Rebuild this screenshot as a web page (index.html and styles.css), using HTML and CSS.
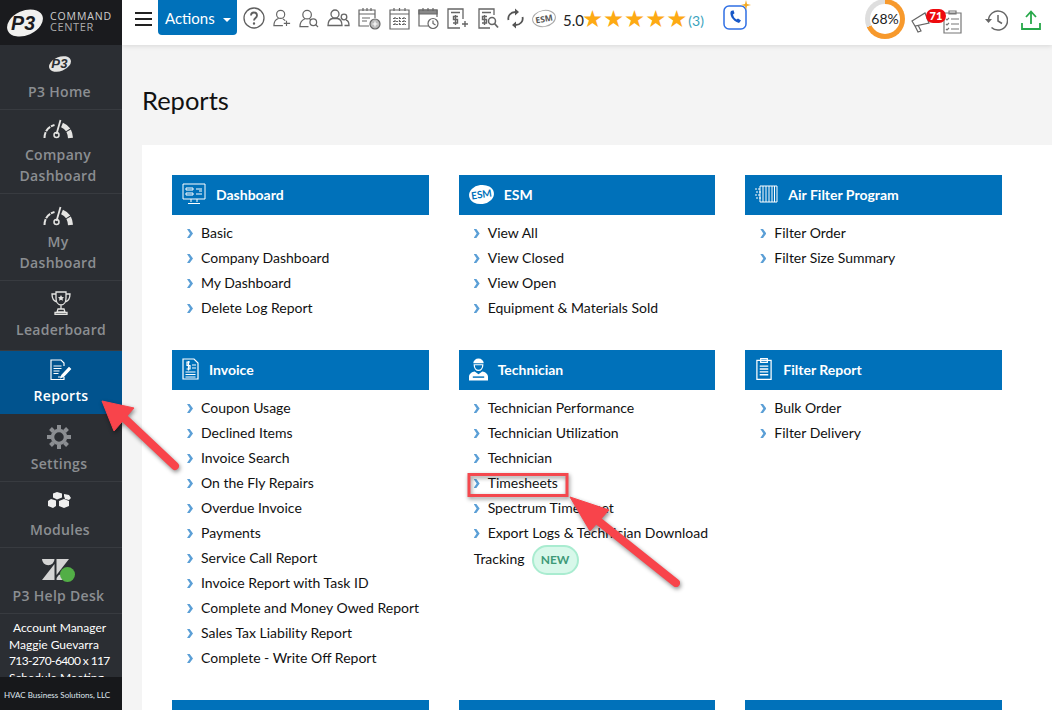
FILE: index.html
```html
<!DOCTYPE html>
<html lang="en">
  <head>
    <meta charset="UTF-8" />
    <meta name="viewport" content="width=device-width, initial-scale=1.0" />
    <title>Reports</title>
    <link rel="stylesheet" href="styles.css">
  </head>
  <body>
    <aside class="sidebar">
      <div class="brand">
        <svg class="brand-logo" width="36" height="36" viewBox="0 0 44 44">
          <ellipse cx="22" cy="22" rx="23" ry="15" fill="#f1f1ef" transform="rotate(-24 22 22)"/>
          <text x="5" y="31" class="logo-text">P3</text>
        </svg>
        <div class="brand-name">COMMAND<br><span>CENTER</span></div>
      </div>

      <a class="nav-item nav-home">
        <svg width="24" height="20" viewBox="0 0 44 36">
          <ellipse cx="22" cy="18" rx="21" ry="13" fill="#e4e4e2" transform="rotate(-22 22 18)"/>
          <text x="6" y="26" class="logo-text logo-dark">P3</text>
        </svg>
        <span>P3 Home</span>
      </a>
      <a class="nav-item nav-company">
        <svg width="30" height="20" viewBox="0 0 30 20" fill="none" stroke="#e4e4e2">
          <path d="M1.500 19c0-6 3-11 10-13" stroke-width="2" stroke-dasharray="6 1"/>
          <path d="M19 6c5 2 8 6 8.500 13" stroke-width="5" stroke-dasharray="8 1"/>
          <path d="M17.500 1l-4 14" stroke-width="1.800"/>
          <circle cx="13.500" cy="16" r="2.500" stroke-width="1.500"/>
        </svg>
        <span>Company<br>Dashboard</span>
      </a>
      <a class="nav-item nav-my">
        <svg width="30" height="20" viewBox="0 0 30 20" fill="none" stroke="#e4e4e2">
          <path d="M1.500 19c0-6 3-11 10-13" stroke-width="2" stroke-dasharray="6 1"/>
          <path d="M19 6c5 2 8 6 8.500 13" stroke-width="5" stroke-dasharray="8 1"/>
          <path d="M17.500 1l-4 14" stroke-width="1.800"/>
          <circle cx="13.500" cy="16" r="2.500" stroke-width="1.500"/>
        </svg>
        <span>My<br>Dashboard</span>
      </a>
      <a class="nav-item nav-leader">
        <svg width="20" height="24" viewBox="0 0 20 24" fill="none" stroke="#e4e4e2" stroke-width="1.300">
          <path d="M5 1h10v6c0 4-2 7-5 7s-5-3-5-7zM5 3H1c0 4 1 7 5 8M15 3h4c0 4-1 7-5 8M10 14v4M7 18h6l1 3H6zM4 21.500h12v2H4z"/>
          <path d="M10 4l1 2 2 .2-1.500 1.500.5 2-2-1-2 1 .5-2L7 6.200 9 6z" fill="#e4e4e2" stroke="none"/>
        </svg>
        <span>Leaderboard</span>
      </a>
      <a class="nav-item nav-reports">
        <svg width="22" height="22" viewBox="0 0 22 22" fill="none" stroke="#fff" stroke-width="1.200">
          <path d="M14 18v2.500H1V1h10l3 3v3"/>
          <path d="M3.500 7h8M3.500 9.500h8M3.500 12h6M3.500 14.500h5M8 18h3"/>
          <path d="M12 16l-1 2.500 2.500-1L20.500 10l-1.500-1.500z" fill="#fff"/>
        </svg>
        <span>Reports</span>
      </a>
      <a class="nav-item nav-settings">
        <svg width="24" height="24" viewBox="0 0 24 24" fill="none" stroke="#8b8e92">
          <circle cx="12" cy="12" r="6.500" stroke-width="3.500"/>
          <path d="M12 0v4M12 20v4M0 12h4M20 12h4M3.500 3.500l3 3M17.500 17.500l3 3M3.500 20.500l3-3M17.500 6.500l3-3" stroke-width="4"/>
        </svg>
        <span>Settings</span>
      </a>
      <a class="nav-item nav-modules">
        <svg width="24" height="19" viewBox="0 0 24 19" fill="#efefef">
          <path d="M9 0l5 1.500v4L9 7.500 5 5.500v-4zM3 7l5 1.500V14l-3 2-5-2V9zM11 9l5-2 5 2v5l-5 2-5-2zM16 2l5 1 2 3-2 2-4-1-1-3z"/>
        </svg>
        <span>Modules</span>
      </a>
      <a class="nav-item nav-help">
        <span class="help-icon">
          <svg width="27" height="21" viewBox="0 0 27 21" fill="#d4d4d4">
            <path d="M12.500 5v16H0zM0 0a6.250 6.250 0 0 0 12.500 0zM14.500 0H27L14.500 16zM14.500 21a6.250 6.250 0 0 1 12.500 0z"/>
          </svg>
          <i class="help-dot"></i>
        </span>
        <span>P3 Help Desk</span>
      </a>
      <div class="account">
        <p class="account-title">Account Manager</p>
        <p>Maggie Guevarra</p>
        <p class="account-phone">713-270-6400 x 117</p>
        <p>Schedule Meeting</p>
      </div>
      <div class="sidebar-foot">HVAC Business Solutions, LLC</div>
    </aside>

    <div class="main">
      <header class="topbar">
        <button class="burger"><i></i><i></i><i></i></button>
        <button class="actions">Actions <b></b></button>

        <div class="tools">
          <svg width="22" height="22" viewBox="0 0 22 22" fill="none" stroke="#5f5f5f" stroke-width="1.300">
            <circle cx="11" cy="11" r="10"/>
            <path d="M8 8.500c0-4 6-4 6 0 0 2.500-3 2.500-3 5" stroke-width="1.800"/>
            <circle cx="11" cy="16.500" r=".6" stroke-width="1.200"/>
          </svg>
          <svg width="18" height="18" viewBox="0 0 20 20" fill="none" stroke="#666" stroke-width="1.300">
            <path d="M4 6a4.500 4.500 0 1 1 9 0c0 2.500-2 4.500-4.500 4.500S4 8.500 4 6zM11 18.500H1c0-4 2-7 5-8M11 11c1 .5 2 1 2.500 2M15 13v6M12 16h7"/>
          </svg>
          <svg width="20" height="19" viewBox="0 0 21 20" fill="none" stroke="#666" stroke-width="1.300">
            <path d="M4 6a4.500 4.500 0 1 1 9 0c0 2.500-2 4.500-4.500 4.500S4 8.500 4 6zM10 18.500H1c0-4 2-7 5-8M11 10.500l1.500.8"/>
            <circle cx="15" cy="14" r="3.500"/>
            <path d="M17.500 16.500l2.500 2.500"/>
          </svg>
          <svg width="23" height="18" viewBox="0 0 23 18" fill="none" stroke="#666" stroke-width="1.300">
            <path d="M4 5a4 4 0 1 1 8 0 4 4 0 0 1-8 0zM1 16.500c0-4 2-6.500 4.500-7h5c2.500.5 4.500 3 4.500 7z"/>
            <circle cx="17" cy="8" r="2.800"/>
            <path d="M17.500 16.500H22c0-3-1-5-3-5.500"/>
          </svg>
          <svg width="23" height="23" viewBox="0 0 23 23" fill="none" stroke="#666" stroke-width="1.200">
            <path d="M11 19H1V3h16v8M1 7h16M5 1v3M9 1v3M13 1v3M4 11h8M4 14h5"/>
            <circle cx="17" cy="17" r="5" fill="#bbb"/>
            <path d="M17 14.500v5M14.500 17h5" stroke="#fff"/>
          </svg>
          <svg width="21" height="23" viewBox="0 0 21 23" fill="none" stroke="#666" stroke-width="1.200">
            <path d="M1 3h19v19H1zM1 7h19M5 1v3M10.500 1v3M16 1v3"/>
            <path d="M6 10v9M10.500 10v9M15 10v9M4 11.500h13M4 14.500h13M4 17.500h13" stroke-dasharray="2 1"/>
          </svg>
          <svg width="21" height="23" viewBox="0 0 21 23" fill="none" stroke="#666" stroke-width="1.200">
            <path d="M10 19H1V3h18v7"/>
            <path d="M1 3h18v4H1z" fill="#888"/>
            <path d="M5 1v3M10 1v3M15 1v3"/>
            <circle cx="15" cy="16.500" r="5"/>
            <path d="M15 13.500v3l2.500 1.500"/>
          </svg>
          <svg width="21" height="21" viewBox="0 0 21 21" fill="none" stroke="#666" stroke-width="1.300">
            <path d="M13 20H1V1h15v10M4 4.500h9"/>
            <path d="M11 8.500H6.500v3h4v3.500H6M8.500 7v10M15 16h6M18 13v6" stroke-width="1.400"/>
          </svg>
          <svg class="tool-q" width="21" height="21" viewBox="0 0 21 21" fill="none" stroke="#666" stroke-width="1.300">
            <path d="M12 20H1V1h15v6M4 4.500h9"/>
            <path d="M9 8.500H4.500v3h4V15H4M6.500 7v10" stroke-width="1.400"/>
            <circle cx="14" cy="13" r="3.500" stroke-width="1.500"/>
            <path d="M16.500 15.500L20 19.500" stroke-width="1.800"/>
          </svg>
          <svg width="17" height="21" viewBox="0 0 17 21" fill="none" stroke="#555" stroke-width="1.800">
            <path d="M1.500 12c-1-4 2-8 7-8M15.500 9c1 4-2 8-7 8"/>
            <path d="M8 .5l4 3.500-4 3.500zM9 20.500L5 17l4-3.500z" fill="#555" stroke="none"/>
          </svg>
          <span class="esm-badge">ESM</span>
        </div>

        <div class="rating">
          <span class="score">5.0</span>
          <span class="stars">★★★★★</span>
          <span class="count">(3)</span>
        </div>

        <svg class="phone" width="28" height="31" viewBox="0 0 28 31" fill="none">
          <rect x="1" y="6" width="22" height="23" rx="5" stroke="#2f6fe4" stroke-width="1.500"/>
          <path d="M8 11c-2 3 1 10 8 12l2-2.500-3-2-1.500 1c-2-1-3-3-3.500-5l1.500-1.200-1-3z" fill="#1758c8"/>
          <path d="M23 0l1 4 4 1-4 1-1 4-1-4-4-1 4-1z" fill="#f4a91f"/>
        </svg>

        <div class="topbar-right">
          <div class="ring"><span>68%</span></div>
          <div class="notices">
            <svg width="20" height="22" viewBox="0 0 20 22" fill="none" stroke="#666" stroke-width="1.200">
              <path d="M1 10l13-8 4 10-14 3zM4 15l3 6 3-1-3-6M15 5l3-1"/>
            </svg>
            <span class="badge">71</span>
            <svg class="notice-clip" width="19" height="25" viewBox="0 0 19 25" fill="none" stroke="#777" stroke-width="1.200">
              <path d="M1 4h17v20H1zM6 4V2h7v3H6z"/>
              <path d="M3 10l1 1 2-2M8 10h8M3 15l1 1 2-2M8 15h8M3 20l1 1 2-2M8 20h8"/>
            </svg>
          </div>
          <svg class="history" width="23" height="21" viewBox="0 0 23 21" fill="none" stroke="#666" stroke-width="1.500">
            <path d="M3.500 10.500a9.500 9.500 0 1 1 3 7"/>
            <path d="M13 5v6l4 2.500"/>
            <path d="M0 9h7l-3.500 4z" fill="#666" stroke="none"/>
          </svg>
          <svg class="upload" width="20" height="20" viewBox="0 0 20 20" fill="none" stroke="#27a84a" stroke-width="1.800">
            <path d="M1 13v6h18v-6M10 14V2M5 7l5-5.500L15 7"/>
          </svg>
        </div>
      </header>

      <h1 class="page-title">Reports</h1>

      <section class="panel">
        <div class="report-grid">
          <div class="report-group">
            <h2 class="group-head">
              <svg width="24" height="22" viewBox="0 0 24 22" fill="none" stroke="#fff">
                <path d="M1 1h22v15H1zM9 16v3M15 16v3M6 20.500h12"/>
                <path d="M4 5h7v2H4zM4 10h7v2H4zM14 6h6M14 11h6M17 8h3"/>
              </svg>
              Dashboard
            </h2>
            <ul class="report-list">
              <li><a>Basic</a></li>
              <li><a>Company Dashboard</a></li>
              <li><a>My Dashboard</a></li>
              <li><a>Delete Log Report</a></li>
            </ul>
          </div>
          <div class="report-group">
            <h2 class="group-head">
              <span class="esm-head">ESM</span>
              ESM
            </h2>
            <ul class="report-list">
              <li><a>View All</a></li>
              <li><a>View Closed</a></li>
              <li><a>View Open</a></li>
              <li><a>Equipment &amp; Materials Sold</a></li>
            </ul>
          </div>
          <div class="report-group">
            <h2 class="group-head">
              <svg width="23" height="18" viewBox="0 0 23 18" fill="none" stroke="#fff">
                <path d="M5 1h17v16H5zM8 1v16M11 1v16M14 1v16M17 1v16M19.500 1v16"/>
                <path d="M0 4h6M1 7h6M0 10h6M1 13h6" stroke-dasharray="2 1"/>
              </svg>
              Air Filter Program
            </h2>
            <ul class="report-list">
              <li><a>Filter Order</a></li>
              <li><a>Filter Size Summary</a></li>
            </ul>
          </div>

          <div class="report-group">
            <h2 class="group-head">
              <svg width="17" height="22" viewBox="0 0 17 22" fill="none" stroke="#fff" stroke-width="1.200">
                <path d="M1 1h11l4 4v16H1z"/>
                <path d="M8 4H5v3.500h3V11H4.500M6.500 3v9.500M10 7h4M10 10h4M3.500 14h10M3.500 16.500h10M3.500 19h10"/>
              </svg>
              Invoice
            </h2>
            <ul class="report-list">
              <li><a>Coupon Usage</a></li>
              <li><a>Declined Items</a></li>
              <li><a>Invoice Search</a></li>
              <li><a>On the Fly Repairs</a></li>
              <li><a>Overdue Invoice</a></li>
              <li><a>Payments</a></li>
              <li><a>Service Call Report</a></li>
              <li><a>Invoice Report with Task ID</a></li>
              <li><a>Complete and Money Owed Report</a></li>
              <li><a>Sales Tax Liability Report</a></li>
              <li><a>Complete - Write Off Report</a></li>
            </ul>
          </div>
          <div class="report-group">
            <h2 class="group-head">
              <svg width="19" height="23" viewBox="0 0 20 23" fill="#fff">
                <path d="M4.500 5a5.500 5 0 0 1 11 0z"/>
                <path d="M5.500 6.500h9c0 3.500-2 6-4.500 6s-4.500-2.500-4.500-6z" fill="none" stroke="#fff" stroke-width="1.300"/>
                <path d="M0 23v-4c0-3 3-5 6-5.500l4 3 4-3c3 .5 6 2.500 6 5.500v4z"/>
                <path d="M4 19.500h12" stroke="#0071ba" stroke-width="1.500"/>
              </svg>
              Technician
            </h2>
            <ul class="report-list">
              <li><a>Technician Performance</a></li>
              <li><a>Technician Utilization</a></li>
              <li><a>Technician</a></li>
              <li><a>Timesheets</a></li>
              <li><a>Spectrum Timesheet</a></li>
              <li><a>Export Logs &amp; Technician Download Tracking</a><span class="new-tag">NEW</span></li>
            </ul>
          </div>
          <div class="report-group">
            <h2 class="group-head">
              <svg width="18" height="24" viewBox="0 0 19 24" fill="none" stroke="#fff" stroke-width="1.300">
                <path d="M2 3h15v20H2zM6 4V1h7v4H6z"/>
                <path d="M5 9h9M5 12h9M5 15h9M5 18h9" stroke-width="1.500"/>
              </svg>
              Filter Report
            </h2>
            <ul class="report-list">
              <li><a>Bulk Order</a></li>
              <li><a>Filter Delivery</a></li>
            </ul>
          </div>

          <div class="report-group"><div class="group-head"></div></div>
          <div class="report-group"><div class="group-head"></div></div>
          <div class="report-group"><div class="group-head"></div></div>
        </div>
      </section>
    </div>

    <!-- callouts pasted over the screenshot -->
    <svg class="callouts" width="1052" height="710" viewBox="0 0 1052 710" fill="none">
      <rect x="469" y="474.500" width="98" height="21" stroke="#f4484e" stroke-width="3"/>
      <path d="M175 466L122 416" stroke="#f8444b" stroke-width="8" stroke-linecap="round"/>
      <path d="M102 401L134 408 114 431z" fill="#f8444b" stroke="#f8444b" stroke-linejoin="round"/>
      <path d="M676 583L592 516" stroke="#f8444b" stroke-width="8" stroke-linecap="round"/>
      <path d="M570 497L609 510 590 531z" fill="#f8444b" stroke="#f8444b" stroke-linejoin="round"/>
    </svg>
  </body>
</html>
```

FILE: styles.css
```css
* {
  box-sizing: border-box;
}

html,
body {
  height: 710px;
  margin: 0;
  overflow: hidden;
}

body {
  display: flex;
  position: relative;
  background-color: #f4f4f4;
  font-family: Lato, sans-serif;
  color: #111;
}

/* Sidebar */
.sidebar {
  width: 122px;
  height: 710px;
  flex-shrink: 0;
  display: flex;
  flex-direction: column;
  position: relative;
  background-color: #2b2e33;
  overflow: hidden;
}

.brand {
  height: 45px;
  flex-shrink: 0;
  display: flex;
  align-items: center;
  gap: 7px;
  padding-left: 7px;
  background-color: #1a1b1e;
}

.brand-name {
  margin-top: -2px;
  font-family: "Open Sans", sans-serif;
  font-size: 10.500px;
  line-height: 12px;
  letter-spacing: .9px;
  color: #cfcfcf;
}

.brand-name span {
  display: block;
  margin-top: -1px;
  color: #aaa;
  font-size: 11px;
  letter-spacing: .6px;
}

.brand-name br {
  display: none;
}

.logo-text {
  font-family: "Liberation Sans", sans-serif;
  font-size: 24px;
  font-weight: 700;
  font-style: italic;
  fill: #1a1b1e;
}

.logo-dark {
  fill: #2b2e33;
}

.nav-item {
  display: flex;
  flex-direction: column;
  align-items: center;
  flex-shrink: 0;
  border-bottom: 1px solid #383b40;
  font-family: "Open Sans", sans-serif;
  font-size: 14px;
  font-weight: 600;
  line-height: 21px;
  letter-spacing: .3px;
  text-align: center;
  color: #8b8e92;
}

.nav-home {
  height: 65px;
  padding-top: 9px;
  padding-right: 3px;
  gap: 7px;
}

.nav-company {
  height: 84px;
  padding-top: 9px;
  padding-right: 6px;
  gap: 5px;
}

.nav-my {
  height: 87px;
  padding-top: 12px;
  padding-right: 6px;
  gap: 5px;
}

.nav-leader {
  height: 70px;
  padding-top: 10px;
  gap: 4px;
}

.nav-reports {
  height: 63px;
  padding-top: 8px;
  gap: 4px;
  border-bottom: 0;
  background-color: #01538e;
  color: #fff;
}

.nav-settings {
  height: 68px;
  padding-top: 11px;
  gap: 4px;
  padding-right: 4px;
}

.nav-modules {
  height: 66px;
  padding-top: 10px;
  padding-right: 2px;
  gap: 8px;
}

.nav-help {
  height: 66px;
  padding-top: 9px;
  padding-right: 5px;
  gap: 4px;
}

.help-icon {
  display: block;
  position: relative;
  height: 24px;
  line-height: 0;
}

.help-icon svg {
  margin-top: 2px;
  margin-right: 6px;
}

.help-dot {
  position: absolute;
  right: 0;
  bottom: -1px;
  width: 15px;
  height: 15px;
  border-radius: 50%;
  background-color: #52ae46;
}

.account {
  padding: 6px 0 0 9px;
  height: 63px;
  flex-shrink: 0;
  overflow: hidden;
  font-size: 12px;
  line-height: 16.500px;
  white-space: nowrap;
  color: #fff;
}

.account p {
  margin: 0;
}

.account-title {
  padding-left: 4px;
}

.account-phone {
  letter-spacing: -.6px;
}

.sidebar-foot {
  height: 33px;
  flex-shrink: 0;
  padding: 12px 0 0 4px;
  background-color: #17181b;
  font-size: 8px;
  line-height: 12px;
  white-space: nowrap;
  color: #dfe6ee;
}

/* Top bar */
.main {
  flex: 1;
  min-width: 0;
}

.topbar {
  height: 45px;
  display: flex;
  align-items: flex-start;
  padding-left: 13px;
  background-color: #fff;
  box-shadow: 0 1px 5px rgba(0, 0, 0, .12);
}

.burger {
  width: 17px;
  height: 14px;
  margin-top: 12px;
  padding: 0;
  border: 0;
  background: none;
  display: flex;
  flex-direction: column;
  justify-content: space-between;
}

.burger i {
  display: block;
  height: 2px;
  background-color: #222;
}

.actions {
  width: 79px;
  height: 35px;
  margin-left: 6px;
  padding: 0 0 0 7px;
  border: 0;
  border-radius: 0 0 4px 4px;
  text-align: left;
  font-family: Lato, sans-serif;
  font-size: 15px;
  color: #fff;
  background-color: #0071ba;
}

.actions b {
  display: inline-block;
  margin-left: 4px;
  border-top: 4px solid #fff;
  border-left: 4px solid transparent;
  border-right: 4px solid transparent;
  vertical-align: middle;
}

.tools {
  display: flex;
  align-items: center;
  gap: 8px;
  height: 36px;
  margin-left: 6px;
}

.tool-q {
  margin-left: 2px;
}

.esm-badge {
  width: 24px;
  height: 17px;
  border: 1px solid #aaa;
  border-radius: 50%;
  transform: rotate(-10deg);
  font-family: "Open Sans", sans-serif;
  font-size: 8.500px;
  font-weight: 700;
  line-height: 15px;
  text-align: center;
  color: #555;
}

.rating {
  display: flex;
  align-items: center;
  height: 40px;
  margin-left: 7px;
}

.score {
  margin-right: -2px;
  font-size: 15px;
  color: #222;
}

.stars {
  font-family: "DejaVu Sans", sans-serif;
  font-size: 23.500px;
  line-height: 1;
  color: #fdaa13;
}

.count {
  margin-left: 1px;
  font-size: 14px;
  color: #3aa3bd;
}

.phone {
  margin-left: 19px;
  flex-shrink: 0;
}

.topbar-right {
  display: flex;
  align-items: flex-start;
  margin-left: auto;
  padding-right: 11px;
}

.ring {
  width: 40px;
  height: 40px;
  margin-top: -1px;
  border-radius: 50%;
  background: conic-gradient(#f7992c 0 68%, #dedede 68% 100%);
  display: flex;
  align-items: center;
  justify-content: center;
}

.ring span {
  width: 30px;
  height: 30px;
  border-radius: 50%;
  background-color: #fff;
  font-size: 14px;
  line-height: 30px;
  text-align: center;
  color: #222;
}

.notices {
  display: flex;
  position: relative;
  align-items: flex-start;
  width: 55px;
  margin-left: 6px;
  padding-top: 11px;
}

.badge {
  position: absolute;
  left: 15px;
  top: 9px;
  width: 20px;
  height: 14px;
  border-radius: 7px;
  background-color: #ee0a0e;
  font-size: 11px;
  font-weight: 900;
  line-height: 14px;
  text-align: center;
  color: #fff;
}

.notice-clip {
  margin-left: 12px;
  margin-top: -2px;
}

.history {
  margin-left: 19px;
  margin-top: 10px;
}

.upload {
  margin-left: 13px;
  margin-top: 10px;
}

/* Report panel */
.page-title {
  margin: 0;
  padding: 40px 0 0 20px;
  height: 100px;
  font-size: 25.500px;
  font-weight: 400;
  line-height: 30px;
  color: #111;
}

.panel {
  height: 565px;
  margin-left: 20px;
  padding: 30px 50px 0 30px;
  overflow: hidden;
  background-color: #fff;
}

.report-grid {
  display: grid;
  grid-template-columns: repeat(3, 1fr);
  column-gap: 30px;
  row-gap: 30px;
}

.group-head {
  display: flex;
  align-items: center;
  gap: 10px;
  height: 40px;
  margin: 0;
  padding: 0 0 2px 10px;
  font-size: 14px;
  font-weight: 700;
  color: #fff;
  background-color: #0071ba;
}

.esm-head {
  width: 25px;
  height: 19px;
  border-radius: 50%;
  transform: rotate(-8deg);
  background-color: #fff;
  font-size: 10px;
  font-weight: 700;
  line-height: 19px;
  text-align: center;
  color: #0071ba;
}

.report-list {
  margin: 0;
  padding: 5px 0 0 15px;
  list-style: none;
  font-size: 14px;
  line-height: 25px;
  color: #111;
}

.report-list a::before {
  content: "";
  display: inline-block;
  width: 6px;
  height: 9px;
  margin-right: 8px;
  background-color: #5b9fd6;
  clip-path: polygon(0 0, 45% 0, 100% 50%, 45% 100%, 0 100%, 50% 50%);
}

.new-tag {
  display: inline-block;
  width: 47px;
  height: 30px;
  margin-left: 7px;
  border: 2px solid #a9ecd0;
  border-radius: 15px;
  background-color: #d8f8ea;
  font-size: 12px;
  font-weight: 700;
  line-height: 26px;
  text-align: center;
  vertical-align: middle;
  color: #3e9a78;
}

.callouts {
  position: absolute;
  left: 0;
  top: 0;
  pointer-events: none;
  filter: drop-shadow(1px 2px 2px rgba(0, 0, 0, .45));
}
```
